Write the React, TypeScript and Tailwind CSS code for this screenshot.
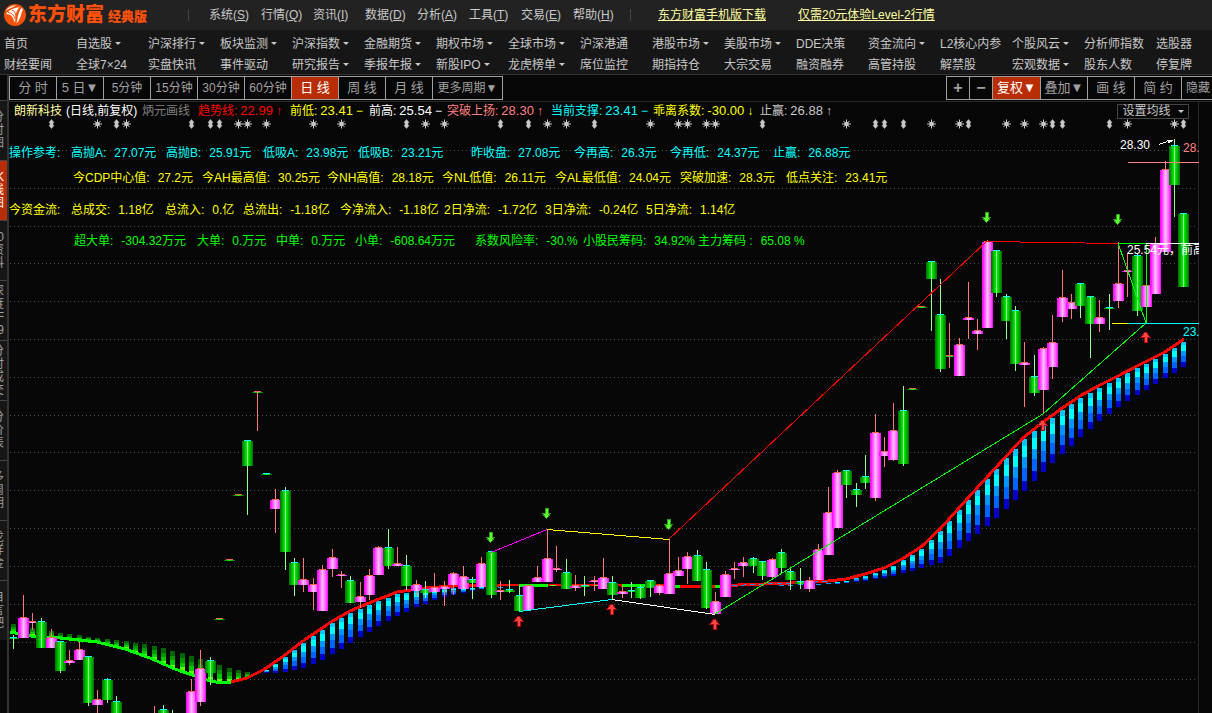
type Candle = [kind: string, high: number, top: number, bottom: number, low: number];
type Point = [x: number, y: number];
type Quote = { label: string; value?: string };

const MENUS = [
  ["系统", "S"], ["行情", "Q"], ["资讯", "I"], ["数据", "D"],
  ["分析", "A"], ["工具", "T"], ["交易", "E"], ["帮助", "H"],
];

// "*" at the end marks an entry with a drop-down
const NAV_TOP = [
  "首页", "自选股*", "沪深排行*", "板块监测*", "沪深指数*", "金融期货*", "期权市场*", "全球市场*", "沪深港通",
  "港股市场*", "美股市场*", "DDE决策", "资金流向*", "L2核心内参", "个股风云*", "分析师指数", "选股器",
];
const NAV_BOTTOM = [
  "财经要闻", "全球7×24", "实盘快讯", "事件驱动", "研究报告*", "季报年报*", "新股IPO*", "龙虎榜单*", "席位监控",
  "期指持仓", "大宗交易", "融资融券", "高管持股", "解禁股", "宏观数据*", "股东人数", "停复牌",
];

const PERIODS = ["分 时", "5 日▼", "5分钟", "15分钟", "30分钟", "60分钟", "日 线", "周 线", "月 线"];
const SIDE_TABS = ["分时图", "K线图", "0资料", "深度F9", "分时成交", "分价表", "多周期", "龙详金", "自言吧"];

const ROW_REF: Quote[] = [
  { label: "操作参考:" },
  { label: "高抛A:", value: "27.07元" },
  { label: "高抛B:", value: "25.91元" },
  { label: "低吸A:", value: "23.98元" },
  { label: "低吸B:", value: "23.21元" },
  { label: "昨收盘:", value: "27.08元" },
  { label: "今再高:", value: "26.3元" },
  { label: "今再低:", value: "24.37元" },
  { label: "止赢:", value: "26.88元" },
];
const ROW_CDP: Quote[] = [
  { label: "今CDP中心值:", value: "27.2元" },
  { label: "今AH最高值:", value: "30.25元" },
  { label: "今NH高值:", value: "28.18元" },
  { label: "今NL低值:", value: "26.11元" },
  { label: "今AL最低值:", value: "24.04元" },
  { label: "突破加速:", value: "28.3元" },
  { label: "低点关注:", value: "23.41元" },
];
const ROW_FLOW: Quote[] = [
  { label: "今资金流:" },
  { label: "总成交:", value: "1.18亿" },
  { label: "总流入:", value: "0.亿" },
  { label: "总流出:", value: "-1.18亿" },
  { label: "今净流入:", value: "-1.18亿" },
  { label: "2日净流:", value: "-1.72亿" },
  { label: "3日净流:", value: "-0.24亿" },
  { label: "5日净流:", value: "1.14亿" },
];
const ROW_ORDERS: Quote[] = [
  { label: "超大单:", value: "-304.32万元" },
  { label: "大单:", value: "0.万元" },
  { label: "中单:", value: "0.万元" },
  { label: "小单:", value: "-608.64万元" },
  { label: "系数风险率:", value: "-30.%" },
  { label: "小股民筹码:", value: "34.92%" },
  { label: "主力筹码 :", value: "65.08 %" },
];

// u = up, d = down, r = limit board with red cap, g = limit board with cyan cap, - = off screen
const CANDLES: Candle[] = [
  ["g", 635, 637, 639, 649], ["u", 595, 617, 638, 638], ["u", 613, 621, 623, 630], ["d", 618, 621, 648, 648],
  ["u", 629, 637, 648, 648], ["d", 641, 641, 671, 673], ["u", 650, 660, 663, 665], ["u", 642, 649, 660, 660],
  ["d", 656, 656, 703, 706], ["u", 690, 699, 705, 715], ["d", 678, 679, 700, 703], ["d", 696, 701, 715, 715],
  ["-", 0, 0, 0, 0], ["-", 0, 0, 0, 0], ["-", 0, 0, 0, 0], ["u", 706, 714, 715, 715],
  ["d", 705, 709, 715, 715], ["d", 710, 714, 715, 715], ["-", 0, 0, 0, 0], ["u", 679, 691, 715, 715],
  ["u", 650, 668, 702, 706], ["d", 657, 660, 673, 685], ["r", 619, 618, 620, 619], ["r", 560, 559, 561, 560],
  ["r", 495, 494, 496, 495], ["d", 440, 440, 466, 515], ["r", 392, 391, 393, 431], ["g", 474, 473, 475, 474],
  ["u", 489, 499, 509, 533], ["d", 487, 490, 552, 570], ["d", 558, 562, 585, 596], ["u", 558, 579, 585, 592],
  ["u", 578, 584, 592, 610], ["u", 565, 569, 611, 611], ["u", 549, 557, 569, 577], ["u", 571, 574, 576, 588],
  ["d", 576, 580, 603, 603], ["u", 582, 596, 602, 608], ["u", 569, 575, 595, 600], ["u", 546, 547, 575, 575],
  ["d", 529, 547, 566, 569], ["u", 547, 563, 566, 566], ["d", 555, 565, 586, 590], ["u", 580, 584, 591, 596],
  ["d", 581, 589, 593, 598], ["u", 573, 587, 592, 592], ["u", 581, 586, 589, 606], ["u", 572, 573, 585, 595],
  ["u", 566, 576, 589, 589], ["d", 577, 579, 583, 599], ["u", 557, 563, 587, 587], ["d", 551, 551, 595, 598],
  ["u", 581, 590, 592, 600], ["d", 580, 589, 592, 593], ["d", 586, 595, 611, 611], ["u", 585, 585, 610, 610],
  ["u", 566, 577, 582, 582], ["u", 529, 558, 582, 582], ["u", 546, 568, 570, 572], ["d", 559, 572, 589, 589],
  ["u", 575, 585, 588, 591], ["d", 576, 585, 587, 596], ["u", 576, 580, 582, 591], ["u", 558, 577, 589, 589],
  ["d", 576, 582, 595, 599], ["u", 586, 591, 594, 598], ["d", 582, 590, 592, 598], ["d", 585, 587, 598, 599],
  ["d", 580, 580, 588, 597], ["u", 584, 585, 593, 595], ["u", 539, 573, 594, 594], ["u", 557, 570, 576, 576],
  ["u", 552, 556, 569, 584], ["d", 550, 555, 581, 581], ["d", 562, 569, 608, 609], ["u", 592, 601, 614, 614],
  ["u", 571, 574, 597, 597], ["u", 562, 568, 570, 579], ["u", 557, 562, 566, 577], ["d", 557, 558, 566, 573],
  ["d", 561, 561, 576, 580], ["u", 558, 559, 577, 579], ["d", 549, 552, 568, 574], ["d", 567, 571, 580, 590],
  ["d", 568, 581, 584, 589], ["u", 577, 580, 589, 592], ["u", 544, 549, 580, 580], ["u", 487, 512, 555, 555],
  ["u", 470, 472, 528, 528], ["d", 470, 470, 485, 498], ["d", 483, 489, 495, 507], ["d", 455, 476, 483, 489],
  ["u", 414, 432, 498, 501], ["u", 437, 451, 456, 467], ["u", 403, 430, 460, 461], ["d", 386, 410, 464, 466],
  ["r", 389, 388, 390, 389], ["r", 307, 306, 308, 307], ["d", 261, 261, 279, 331], ["d", 279, 314, 369, 372],
  ["r", 323, 355, 357, 368], ["u", 338, 344, 376, 376], ["u", 282, 317, 320, 339], ["u", 319, 330, 334, 350],
  ["u", 240, 241, 328, 328], ["d", 250, 250, 293, 297], ["d", 294, 296, 321, 339], ["d", 306, 310, 364, 371],
  ["u", 342, 362, 365, 407], ["d", 355, 376, 393, 396], ["u", 347, 348, 390, 414], ["u", 315, 342, 367, 379],
  ["u", 270, 297, 317, 322], ["u", 294, 302, 309, 319], ["d", 283, 283, 306, 318], ["d", 296, 296, 324, 358],
  ["u", 300, 317, 324, 332], ["g", 294, 307, 309, 330], ["u", 242, 283, 301, 308], ["u", 253, 270, 272, 297],
  ["d", 253, 255, 311, 316], ["u", 284, 285, 307, 307], ["u", 237, 243, 294, 294], ["u", 161, 169, 252, 252],
  ["d", 139, 145, 185, 217], ["d", 213, 213, 287, 287],
];

// trend line and the outer edges of the ribbon hanging on it
const TREND: Point[] = [
  [10, 632], [36, 637], [60, 638], [97, 642], [125, 649], [150, 658], [175, 669], [195, 676], [207, 680], [216, 682],
  [231, 682], [247, 678], [257, 673], [265, 669], [285, 655], [303, 641], [331, 622], [350, 611], [369, 603],
  [397, 592], [425, 588], [453, 586], [500, 585], [620, 585], [665, 586], [720, 586], [738, 585], [790, 583],
  [828, 581], [846, 579], [865, 574], [884, 568], [902, 559], [921, 547], [940, 529], [958, 509], [977, 488],
  [1000, 463], [1023, 438], [1043, 422], [1061, 409], [1080, 396], [1100, 385], [1118, 376], [1137, 366],
  [1155, 357], [1165, 352], [1184, 339],
];
const UPPER: Point[] = [
  [13, 624], [32, 628], [51, 631], [69, 634], [107, 639], [125, 641], [144, 644], [163, 648], [181, 653], [200, 659],
  [219, 665], [238, 670], [247, 672],
];
const LOWER: Point[] = [
  [257, 673], [275, 673], [285, 672], [294, 670], [303, 668], [322, 660], [341, 649], [360, 637], [378, 626],
  [397, 616], [416, 607], [434, 600], [453, 595], [481, 589], [509, 587], [730, 587], [818, 585], [846, 583],
  [865, 581], [884, 578], [903, 573], [921, 568], [940, 563], [959, 548], [977, 534], [996, 518], [1006, 509],
  [1024, 491], [1043, 472], [1062, 454], [1080, 437], [1099, 421], [1118, 407], [1137, 395], [1165, 378], [1183, 367],
];

const GRID_Y = [150, 188, 226, 263, 301, 339, 377, 415, 452, 490, 528, 566, 604, 642, 679];
const STARS = [
  97, 126, 238, 247, 266, 313, 341, 425, 444, 547, 566, 650, 678, 687, 706, 715, 846, 931, 959, 1006, 1024, 1043,
  1127, 1174,
];
const PINS = [51, 116, 191, 210, 219, 406, 500, 528, 594, 762, 875, 884, 903, 968, 1052, 1062, 1109, 1183];
const SELL: Point[] = [[490, 537], [546, 513], [668, 524], [986, 217], [1117, 219]];
const BUY: Point[] = [[518, 621], [611, 609], [714, 624], [1042, 425], [1145, 337]];

const BLUE_BANDS = [["#00c8ff", 0, 0.13], ["#00ffff", 0.13, 0.35], ["#0096ff", 0.35, 0.56], ["#0064ff", 0.56, 0.8], ["#0000c8", 0.8, 1]] as const;
const GREEN_BANDS = [["#006400", 0, 0.3], ["#009600", 0.3, 0.55], ["#00c800", 0.55, 0.8], ["#64ff00", 0.8, 1]] as const;

const candleX = (i: number) => Math.round(13.2 + 9.362 * i);
const toPoints = (pts: Point[]) => pts.map(p => p.join(",")).join(" ");
const slice = (from: number, to: number) => TREND.filter(([x]) => x >= from && x <= to);

function valueAt(pts: Point[], x: number) {
  const next = pts.findIndex(p => p[0] >= x);
  if (next <= 0) return pts[next === 0 ? 0 : pts.length - 1][1];
  const [x0, y0] = pts[next - 1];
  const [x1, y1] = pts[next];
  return y0 + ((y1 - y0) * (x - x0)) / (x1 - x0);
}

function Ribbon({ index }: { index: number }) {
  const x = candleX(index);
  const green = x < 252;
  const top = Math.round(green ? valueAt(UPPER, x) : valueAt(TREND, x) + 2);
  const bottom = Math.round(green ? valueAt(TREND, x) : valueAt(LOWER, x));
  const h = bottom - top;
  if (h <= 0) return null;
  return (
    <>
      {(green ? GREEN_BANDS : BLUE_BANDS).map(([fill, a, b]) => (
        <rect key={fill} x={x - 2} y={top + Math.round(h * a)} width={5}
          height={Math.round(h * b) - Math.round(h * a)} fill={fill} />
      ))}
    </>
  );
}

function CandleShape({ index }: { index: number }) {
  const [kind, high, top, bottom, low] = CANDLES[index];
  if (kind === "-") return null;
  const x = candleX(index);
  const up = kind === "u";
  const wick = up || kind === "r" ? "#ff7878" : "#96ff96";
  const body = <rect x={x - 5} y={top + 1} width={11} height={Math.max(bottom - top - 1, 1)} fill={up ? "url(#up)" : "url(#down)"} />;
  return (
    <>
      {up ? null : body}
      <rect x={x} y={high} width={1} height={Math.max(low - high, 0)} fill={wick} />
      {up ? body : null}
      <rect x={x - 3} y={top} width={7} height={1} fill={up || kind === "r" ? "#ff6450" : "#00ffff"} />
    </>
  );
}

function Chart() {
  return (
    <svg className="block h-[611px] w-[1190px]" viewBox="9 102 1190 611" shapeRendering="crispEdges" role="img" aria-label="朗新科技 日线">
      <defs>
        <linearGradient id="up">
          <stop offset="0" stopColor="#ff00ff" />
          <stop offset="0.15" stopColor="#ff28ff" />
          <stop offset="0.5" stopColor="#ffbeff" />
          <stop offset="0.85" stopColor="#ff46ff" />
          <stop offset="1" stopColor="#ff00ff" />
        </linearGradient>
        <linearGradient id="down">
          <stop offset="0" stopColor="#006e00" />
          <stop offset="0.5" stopColor="#00ff00" />
          <stop offset="1" stopColor="#006e00" />
        </linearGradient>
      </defs>

      {GRID_Y.map(y => (
        <line key={y} x1={10} x2={1198} y1={y + 0.5} y2={y + 0.5} stroke="#505050" strokeDasharray="1 3" />
      ))}

      {/* Event markers */}
      <g stroke="#c8c8c8" fill="#c8c8c8" shapeRendering="auto">
        {STARS.map(x => (
          <path key={x} d={`M${x - 4} 124h9M${x + 0.5} 119.5v9M${x - 2.5} 121l6 6M${x + 3.5} 121l-6 6M${x - 1} 122.5h3v3h-3z`} />
        ))}
        {PINS.map(x => (
          <path key={x} strokeWidth={0.5} d={`M${x + 0.5} 119.5l2.5 3h-1v3h1l-2.5 3l-2.5 -3h1v-3h-1z`} />
        ))}
      </g>

      {CANDLES.map((_, i) => <Ribbon key={i} index={i} />)}

      {/* Trend line */}
      <g fill="none" strokeWidth={3}>
        <polyline points={toPoints(slice(0, 231))} stroke="#00ff00" />
        <polyline points={toPoints(slice(231, 1184))} stroke="#ff0000" />
        <path d="M519 585.5h29M622 585.5h31M675 586.5h5M715 586.5h5" stroke="#00ff00" />
        <path d="M550 585.5h50" stroke="#64ff00" strokeWidth={1} strokeDasharray="6 5" />
        <path d="M732 585.5L828 581.5" stroke="#0096ff" strokeWidth={1} strokeDasharray="5 4" />
      </g>

      {CANDLES.map((_, i) => <CandleShape key={i} index={i} />)}

      {/* Swing lines */}
      <g fill="none" strokeWidth={1}>
        <path d="M491 552.5L547 529.5" stroke="#ff00ff" />
        <path d="M547 529.5L669 539.5" stroke="#ffff00" />
        <path d="M669 539L987 241" stroke="#ff0000" />
        <path d="M987 241.5L1118 243.5" stroke="#ff0000" />
        <path d="M519 611.5L612 599.5" stroke="#00ffff" />
        <path d="M612 599.5L715 614.5" stroke="#ffffff" />
        <path d="M715 614L1043 414L1146 323M1118 243.5h28v80M1118 243L1146 323" stroke="#00ff00" />
        <path d="M1146 243.5h53" stroke="#ffffff" />
        <path d="M1112 323.5h16" stroke="#ffff00" />
        <path d="M1128 323.5h71" stroke="#00ffff" />
        <path d="M1128 162.5h71" stroke="#ff8080" />
      </g>

      {/* Sell / buy arrows */}
      {SELL.map(([x, y]) => (
        <path key={x} d={`M${x - 1} ${y - 5}h3v5h3l-4 5h-1l-4 -5h3z`} fill="#64ff3c" stroke="#28a014" />
      ))}
      {BUY.map(([x, y]) => (
        <path key={x} d={`M${x - 1} ${y + 5}h3v-5h3l-4 -5h-1l-4 5h3z`} fill="#ff4646" stroke="#b40a0a" />
      ))}

      {/* Price notes */}
      <g className="font-['Liberation_Sans','Noto_Sans_CJK_SC',sans-serif] text-[12px]">
        <text x={1120} y={149} fill="#ffffff">28.30</text>
        <path d="M1159 144.500l8 -3" stroke="#ffffff" />
        <path d="M1166 139.500h8l-5 4z" fill="#ffffff" />
        <text x={1183} y={152} fill="#ff8080">28.30</text>
        <text x={1127} y={254} fill="#ffffff">25.54元，前高</text>
        <text x={1183} y={336} fill="#00ffff">23.41</text>
      </g>
    </svg>
  );
}

function QuoteRow({ items, className }: { items: Quote[]; className: string }) {
  return (
    <div className={`grid h-4 items-center ${className}`}>
      {items.map(q => (
        <span key={q.label} className="flex gap-2">
          <span>{q.label}</span>
          {q.value && <span>{q.value}</span>}
        </span>
      ))}
    </div>
  );
}

function Signal({ label, value, mark, className }: { label: string; value: string; mark: string; className: string }) {
  return (
    <span className={`flex items-center gap-[3px] ${className}`}>
      <span>{label}:</span>
      <span className="text-[13px]">{value}</span>
      <span>{mark}</span>
    </span>
  );
}

function Caret() {
  return <span className="ml-[3px] border-x-[3px] border-t-[3px] border-x-transparent border-t-current" />;
}

function NavLink({ name }: { name: string }) {
  return (
    <a href="#" className="flex items-center">
      {name.replace("*", "")}
      {name.endsWith("*") && <Caret />}
    </a>
  );
}

export default function App() {
  return (
    <div className="flex h-screen flex-col overflow-hidden whitespace-nowrap bg-[#070707] font-['Liberation_Sans','Noto_Sans_CJK_SC',sans-serif] text-[12px] leading-4 text-[#c8c8c8]">
      {/* Title bar */}
      <header className="flex h-[30px] shrink-0 items-center bg-[#222222]">
        <div className="flex w-[188px] items-center pl-1 text-[#ff500a]">
          <svg className="size-[22px]" viewBox="0 0 22 22" aria-hidden="true">
            <circle cx="11" cy="11" r="11" fill="#f4520b" />
            <path d="M1.500 7C4 3 8 1.500 12 1.500C9 3 5 4.500 1.500 7Z" fill="#fff" />
            <path d="M2 10C6 5 11 4 16 3C11 7 12 12 11 19C9 13 7 10 2 10Z" fill="#fff" />
            <path d="M17.500 4C14 8 14 13 12.500 19.500C17 15 17 9 19 5.500Z" fill="#fff" />
            <path d="M4 8.500C8 9 10 11 11 15M8 6C11 7 12 10 12 14" fill="none" stroke="#f4520b" />
          </svg>
          <span className="ml-[2px] text-[19px] font-black">东方财富</span>
          <span className="ml-1 pt-1 text-[13px] font-black">经典版</span>
        </div>
        <span className="h-3 w-px bg-[#444444]" />
        <nav className="ml-5 flex">
          {MENUS.map(([name, key]) => (
            <button key={key} className="w-[52px] text-left">
              {name}(<u>{key}</u>)
            </button>
          ))}
        </nav>
        <span className="ml-[5px] h-3 w-px bg-[#444444]" />
        <div className="ml-[27px] flex gap-8 text-[#ffffa0] underline">
          <a href="#">东方财富手机版下载</a>
          <a href="#">仅需20元体验Level-2行情</a>
        </div>
      </header>

      {/* Shortcut links */}
      <nav className="grid h-[45px] shrink-0 grid-cols-[repeat(17,72px)] grid-rows-[21px_21px] items-center overflow-hidden border-b border-[#333333] bg-[#161616] pl-1 pt-[3px]">
        {NAV_TOP.map(n => <NavLink key={n} name={n} />)}
        {NAV_BOTTOM.map(n => <NavLink key={n} name={n} />)}
      </nav>

      <div className="flex min-h-0 flex-1">
        {/* Side tabs */}
        <aside className="flex w-[7px] shrink-0 flex-col overflow-hidden pt-[25px]">
          {SIDE_TABS.map((tab, i) => (
            <button
              key={tab}
              className={`flex h-[60px] shrink-0 flex-col items-end justify-center border-t border-[#444444] pr-[3px] leading-[13px] ${
                i === 1 ? "bg-[#b92d05] text-white" : "bg-[#161616] text-[#a0a0a0]"
              }`}
            >
              {[...tab].map((ch, n) => <span key={n} className="block">{ch}</span>)}
            </button>
          ))}
        </aside>

        <main className="flex min-w-0 flex-1 flex-col border-l-2 border-[#333333]">
          {/* Period toolbar */}
          <div className="flex h-[27px] shrink-0 items-center overflow-hidden border-b border-[#282828]">
            <div className="flex h-6 border border-[#a0a0a0] text-[#a0a0a0]">
              {PERIODS.map((p, i) => (
                <button
                  key={p}
                  className={`w-[47px] border-r border-[#a0a0a0] ${i === 6 ? "bg-[#b92d05] text-white" : ""} ${
                    p.includes(" ") ? "text-[13px]" : "text-[12px]"
                  }`}
                >
                  {p}
                </button>
              ))}
              <button className="w-[69px]">更多周期▼</button>
            </div>
            <div className="-mr-4 ml-auto flex h-6 shrink-0 border border-[#a0a0a0] text-[#a0a0a0]">
              <button className="w-[23px] border-r border-[#a0a0a0] text-[16px] font-bold">+</button>
              <button className="w-[23px] border-r border-[#a0a0a0] text-[16px] font-bold">−</button>
              <button className="w-[48px] border-r border-[#a0a0a0] bg-[#b92d05] text-[13px] text-white">复权▼</button>
              <button className="w-[47px] border-r border-[#a0a0a0] text-[13px]">叠加▼</button>
              <button className="w-[47px] border-r border-[#a0a0a0] text-[13px]">画 线</button>
              <button className="w-[47px] border-r border-[#a0a0a0] text-[13px]">简 约</button>
              <button className="w-[45px] pl-1 text-left">隐藏</button>
            </div>
          </div>

          <div className="relative min-h-0 flex-1 overflow-hidden">
            <div className="w-[1190px] border-r border-[#282828]">
              <Chart />
            </div>

            {/* Indicator read-outs over the chart */}
            <div className="absolute inset-x-0 top-0">
              <div className="flex h-[18px] items-center pl-[5px]">
                <div className="grid grid-cols-[52px_76px_56px_92px_79px_78px_104px_102px_107px_80px] items-center">
                  <span className="text-[#ffffa0]">朗新科技</span>
                  <span className="text-white">(日线,前复权)</span>
                  <span className="text-[#808080]">炳元画线</span>
                  <Signal label="趋势线" value="22.99" mark="↑" className="text-[#ff0000]" />
                  <Signal label="前低" value="23.41" mark="−" className="text-[#ffff00]" />
                  <Signal label="前高" value="25.54" mark="−" className="text-white" />
                  <Signal label="突破上扬" value="28.30" mark="↑" className="text-[#ff8080]" />
                  <Signal label="当前支撑" value="23.41" mark="−" className="text-[#00ffff]" />
                  <Signal label="乖离系数" value="-30.00" mark="↓" className="text-[#ffff00]" />
                  <Signal label="止赢" value="26.88" mark="↑" className="text-[#c8c8c8]" />
                </div>
                <button className="ml-auto mr-[23px] flex h-[15px] w-[72px] items-center justify-center gap-1 border border-[#444444]">
                  设置均线
                  <Caret />
                </button>
              </div>
              <div className="pt-[25px] text-[#00ffff]">
                <QuoteRow items={ROW_REF} className="grid-cols-[62px_95px_97px_95px_113px_103px_96px_103px_90px]" />
              </div>
              <div className="pl-16 pt-[9px] text-[#ffff00]">
                <QuoteRow items={ROW_CDP} className="grid-cols-[129px_125px_115px_113px_125px_106px_110px]" />
              </div>
              <div className="pt-4 text-[#ffff00]">
                <QuoteRow items={ROW_FLOW} className="grid-cols-[62px_94px_78px_97px_104px_101px_101px_100px]" />
              </div>
              <div className="pl-[65px] pt-[15px] text-[#00ff00]">
                <QuoteRow items={ROW_ORDERS} className="grid-cols-[123px_79px_79px_120px_108px_115px_110px]" />
              </div>
            </div>
          </div>
        </main>
      </div>
    </div>
  );
}
